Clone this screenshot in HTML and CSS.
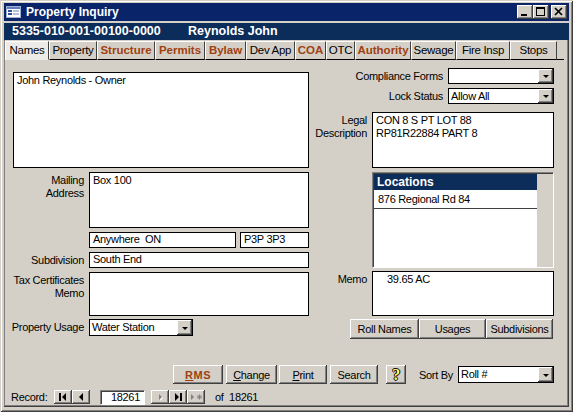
FILE: index.html
```html
<!DOCTYPE html>
<html>
<head>
<meta charset="utf-8">
<title>Property Inquiry</title>
<link rel="stylesheet" href="styles.css">
</head>
<body>
<div class="window">
  <div class="titlebar">
    <svg class="appicon" width="15" height="12" viewBox="0 0 15 12">
      <rect x="0.5" y="0.5" width="14" height="11" fill="#fff" stroke="#9fb0d0"/>
      <rect x="1" y="1" width="13" height="2" fill="#5f7fc0"/>
      <rect x="2" y="4" width="4" height="2" fill="#2f4f98"/>
      <rect x="7" y="4" width="6" height="2" fill="#b4c2de"/>
      <rect x="2" y="7" width="4" height="2" fill="#2f4f98"/>
      <rect x="7" y="7" width="6" height="2" fill="#b4c2de"/>
    </svg>
    <span class="title">Property Inquiry</span>
    <div class="winbtns">
      <span class="wb"><svg width="16" height="14" viewBox="0 0 16 14"><rect x="4" y="9" width="6" height="2" fill="#000"/></svg></span>
      <span class="wb"><svg width="16" height="14" viewBox="0 0 16 14"><rect x="3.5" y="2.5" width="8" height="8" fill="none" stroke="#000"/><rect x="3" y="2" width="9" height="2" fill="#000"/></svg></span>
      <span class="wb wb-close"><svg width="16" height="14" viewBox="0 0 16 14"><path d="M4 3 L11 10 M11 3 L4 10" stroke="#000" stroke-width="1.7"/></svg></span>
    </div>
  </div>

  <div class="client">
    <div class="header"><span class="roll">5335-010-001-00100-0000</span><span>Reynolds John</span></div>

    <div class="tabs">
      <span class="tab active">Names</span>
      <span class="tab">Property</span>
      <span class="tab hot">Structure</span>
      <span class="tab hot">Permits</span>
      <span class="tab hot">Bylaw</span>
      <span class="tab">Dev App</span>
      <span class="tab hot">COA</span>
      <span class="tab">OTC</span>
      <span class="tab hot">Authority</span>
      <span class="tab">Sewage</span>
      <span class="tab">Fire Insp</span>
      <span class="tab">Stops</span>
      <span class="tab-fill"></span>
    </div>

    <div class="panel">
      <div class="col-left">
        <div class="box owner">John Reynolds - Owner</div>
        <div class="row">
          <div class="lbl lbl-top">Mailing<br>Address</div>
          <div class="box mailing">Box 100</div>
        </div>
        <div class="row indent">
          <div class="box city">Anywhere&nbsp; ON</div>
          <div class="box postal">P3P 3P3</div>
        </div>
        <div class="row">
          <div class="lbl">Subdivision</div>
          <div class="box line">South End</div>
        </div>
        <div class="row">
          <div class="lbl lbl-top">Tax Certificates<br>Memo</div>
          <div class="box taxmemo"></div>
        </div>
        <div class="row row-usage">
          <div class="lbl">Property Usage</div>
          <div class="combo usage"><span class="val">Water Station</span><span class="dd"><span class="arrow"></span></span></div>
        </div>
      </div>

      <div class="col-right">
        <div class="row">
          <div class="rlbl">Compliance Forms</div>
          <div class="combo rcombo"><span class="val"></span><span class="dd"><span class="arrow"></span></span></div>
        </div>
        <div class="row">
          <div class="rlbl">Lock Status</div>
          <div class="combo rcombo"><span class="val">Allow All</span><span class="dd"><span class="arrow"></span></span></div>
        </div>
        <div class="row legal-row">
          <div class="slbl">Legal<br>Description</div>
          <div class="box legal">CON 8 S PT LOT 88<br>RP81R22884 PART 8</div>
        </div>
        <div class="row">
          <div class="listbox">
            <div class="list">
              <div class="lhead">Locations</div>
              <div class="lrow">876 Regional Rd 84</div>
            </div>
            <div class="lpad"></div>
          </div>
        </div>
        <div class="row memo-row">
          <div class="slbl">Memo</div>
          <div class="box memo">39.65 AC</div>
        </div>
        <div class="row btn-row">
          <span class="btn b-roll">Roll Names</span>
          <span class="btn b-usages">Usages</span>
          <span class="btn b-subs">Subdivisions</span>
        </div>
      </div>
    </div>

    <div class="actions">
      <span class="btn b-rms"><u>R</u>MS</span>
      <span class="btn b-change"><u>C</u>hange</span>
      <span class="btn b-print"><u>P</u>rint</span>
      <span class="btn b-search">Search</span>
      <span class="btn b-help"><span class="q">?</span></span>
      <span class="sort-lbl">Sort By</span>
      <div class="combo sortcombo"><span class="val">Roll #</span><span class="dd"><span class="arrow"></span></span></div>
    </div>

    <div class="nav">
      <span class="rec-lbl">Record:</span>
      <span class="nb"><svg width="18" height="14" viewBox="0 0 18 14"><rect x="5" y="3" width="2" height="8" fill="#000"/><path d="M12 3 L8 7 L12 11 Z" fill="#000"/></svg></span>
      <span class="nb"><svg width="18" height="14" viewBox="0 0 18 14"><path d="M11 3 L7 7 L11 11 Z" fill="#000"/></svg></span>
      <span class="recbox">18261</span>
      <span class="nb"><svg width="18" height="14" viewBox="0 0 18 14"><path d="M8 4 L11 7 L8 10 Z" fill="#fff" transform="translate(1 1)"/><path d="M8 4 L11 7 L8 10 Z" fill="#808080"/></svg></span>
      <span class="nb"><svg width="18" height="14" viewBox="0 0 18 14"><path d="M6 3 L10 7 L6 11 Z" fill="#000"/><rect x="11" y="3" width="2" height="8" fill="#000"/></svg></span>
      <span class="nb"><svg width="18" height="14" viewBox="0 0 18 14"><path d="M4 4 L7 7 L4 10 Z" fill="#808080"/><path d="M10 7 H15 M12.5 4.5 V9.5 M10.8 5.3 L14.2 8.7 M14.2 5.3 L10.8 8.7" stroke="#808080" stroke-width="1"/></svg></span>
      <span class="of">of&nbsp; 18261</span>
    </div>
  </div>
</div>
</body>
</html>
```

FILE: styles.css
```css
* { box-sizing: border-box; margin: 0; padding: 0; }

body {
  width: 573px;
  height: 412px;
  overflow: hidden;
  background: #d4d0c8;
  font-family: "Liberation Sans", Arial, sans-serif;
  font-size: 11px;
  letter-spacing: -0.3px;
  color: #000;
}

.window {
  width: 573px;
  height: 412px;
  background: #d4d0c8;
  padding: 3px 4px 5px 4px;
  display: flex;
  flex-direction: column;
  box-shadow: inset 1px 1px #d4d0c8, inset -1px -1px #404040, inset 2px 2px #fff, inset -2px -2px #808080;
}

/* title bar */
.titlebar {
  height: 18px;
  background: #0a246a;
  color: #fff;
  display: flex;
  align-items: center;
  letter-spacing: 0;
}
.appicon { margin-left: 2px; flex: none; }
.title { margin-left: 5px; font-weight: bold; font-size: 12px; }
.winbtns { margin-left: auto; margin-right: 2px; display: flex; }
.wb {
  width: 16px;
  height: 14px;
  background: #d4d0c8;
  display: block;
  box-shadow: inset -1px -1px #404040, inset 1px 1px #fff, inset -2px -2px #808080;
}
.wb svg { display: block; }
.wb-close { margin-left: 2px; }

/* client */
.client {
  flex: 1;
  margin-top: 2px;
  display: flex;
  flex-direction: column;
  box-shadow: inset -1px -1px #404040, inset -2px -2px #808080, inset 1px 0 #808080;
}

.header {
  height: 17px;
  background: #0c2c5a;
  color: #fff;
  font-weight: bold;
  font-size: 12.5px;
  line-height: 17px;
  letter-spacing: 0;
  padding-left: 8px;
  display: flex;
}
.roll { width: 176px; }

/* tabs */
.tabs {
  height: 20px;
  padding-top: 1px;
  padding-left: 1px;
  margin-right: 5px;
  display: grid;
  grid-template-columns: 44px 48px 58px 50px 41px 49px 31px 29px 56px 45px 54px 47px 1fr;
}
.tab {
  height: 19px;
  line-height: 17px;
  font-size: 11.5px;
  text-align: center;
  white-space: nowrap;
  border-top: 1px solid #fff;
  border-left: 1px solid #fff;
  border-right: 1px solid #404040;
  border-bottom: 1px solid #000;
  background: #d4d0c8;
}
.tab.hot { color: #a0400f; font-weight: bold; letter-spacing: 0; }
.tab.active {
  background: #ecebe8;
  border-bottom-color: #ecebe8;
}
.tab-fill { border-bottom: 1px solid #000; }

/* panel */
.panel {
  display: flex;
  padding-left: 4px;
  height: 279px;
}
.col-left {
  width: 301px;
  padding-top: 12px;
  display: flex;
  flex-direction: column;
  gap: 4px;
}
.col-right {
  width: 241px;
  margin-left: 4px;
  padding-top: 8px;
  display: flex;
  flex-direction: column;
  gap: 4px;
}

.row { display: flex; }
.indent { padding-left: 81px; gap: 4px; }

.box {
  background: #fff;
  border: 1px solid #000;
  padding: 1px 3px;
  line-height: 13px;
  white-space: nowrap;
}
.owner { margin-left: 5px; width: 296px; height: 96px; }
.mailing { width: 220px; height: 56px; }
.city { width: 147px; height: 16px; line-height: 13px; padding-top: 0; }
.postal { width: 69px; height: 16px; padding-top: 0; }
.line { width: 220px; height: 16px; padding-top: 0; }
.taxmemo { width: 220px; height: 44px; }

.lbl {
  width: 81px;
  padding-right: 5px;
  text-align: right;
  white-space: nowrap;
  line-height: 16px;
}
.lbl-top { line-height: 13px; padding-top: 2px; }
.row-usage { margin-top: -1px; }

/* combo box */
.combo {
  display: flex;
  background: #fff;
  border: 1px solid #000;
  height: 16px;
}
.combo .val { flex: 1; padding-left: 2px; line-height: 14px; white-space: nowrap; }
.combo .dd {
  width: 15px;
  height: 14px;
  background: #d4d0c8;
  display: flex;
  align-items: center;
  justify-content: center;
  box-shadow: inset -1px -1px #404040, inset 1px 1px #fff, inset -2px -2px #808080;
}
.arrow {
  width: 0;
  height: 0;
  border-left: 3px solid transparent;
  border-right: 3px solid transparent;
  border-top: 3px solid #000;
  margin-top: 1px;
}
.usage { width: 104px; height: 17px; }
.usage .dd { height: 15px; }

.rlbl {
  flex: 1;
  text-align: right;
  padding-right: 5px;
  line-height: 16px;
  white-space: nowrap;
}
.rcombo { width: 106px; }

.legal-row { margin-top: 4px; }
.slbl {
  width: 59px;
  padding-right: 5px;
  text-align: right;
  line-height: 13px;
  padding-top: 2px;
  white-space: nowrap;
}
.legal { width: 182px; height: 56px; padding-top: 1px; }

/* list box */
.listbox {
  margin-left: 59px;
  width: 182px;
  height: 96px;
  display: flex;
  border: 1px solid;
  border-color: #808080 #fff #fff #808080;
  box-shadow: inset 1px 1px #404040;
  padding: 1px 0 0 1px;
}
.list { flex: 1; background: #fff; }
.lhead {
  height: 16px;
  background: #0c2c5a;
  color: #fff;
  font-weight: bold;
  font-size: 12px;
  letter-spacing: 0;
  line-height: 16px;
  padding-left: 3px;
}
.lrow {
  height: 19px;
  line-height: 18px;
  padding-left: 4px;
  border-bottom: 1px solid #404040;
}
.lpad { width: 16px; background: #d4d0c8; }

.memo-row { margin-top: -1px; }
.memo { width: 182px; height: 45px; padding-left: 14px; }

/* buttons */
.btn {
  display: flex;
  align-items: center;
  justify-content: center;
  height: 20px;
  background: #d4d0c8;
  white-space: nowrap;
  box-shadow: inset -1px -1px #404040, inset 1px 1px #fff, inset -2px -2px #808080;
}
.btn-row { justify-content: flex-end; margin-top: -1px; margin-right: 1px; }
.b-roll { width: 69px; }
.b-usages { width: 67px; }
.b-subs { width: 67px; }

.actions {
  margin-top: 26px;
  height: 19px;
  padding-left: 169px;
  display: flex;
  align-items: center;
}
.actions .btn { height: 19px; }
.b-rms { width: 50px; color: #a0400f; font-weight: bold; letter-spacing: 0.5px; }
.b-change { width: 51px; margin-left: 3px; }
.b-print { width: 48px; margin-left: 2px; }
.b-search { width: 48px; margin-left: 3px; }
.b-help { width: 20px; margin-left: 8px; }
.q {
  font-family: "Liberation Serif", serif;
  font-weight: bold;
  font-size: 16px;
  color: #ffff70;
  text-shadow: 1px 0 #000, -1px 0 #000, 0 1px #000, 0 -1px #000;
  line-height: 16px;
}
.sort-lbl { margin-left: 13px; width: 39px; }
.sortcombo { width: 96px; height: 17px; }
.sortcombo .dd { height: 15px; }

/* record navigation */
.nav {
  margin-top: 6px;
  height: 14px;
  display: flex;
  align-items: center;
  padding-left: 7px;
}
.rec-lbl { width: 43px; }
.nb {
  width: 18px;
  height: 14px;
  background: #d4d0c8;
  display: block;
  box-shadow: inset -1px -1px #404040, inset 1px 1px #fff, inset -2px -2px #808080;
}
.nb svg { display: block; }
.recbox {
  margin-left: 10px;
  width: 45px;
  height: 15px;
  background: #fff;
  text-align: right;
  padding-right: 4px;
  line-height: 13px;
  border: 1px solid;
  border-color: #808080 #fff #fff #808080;
  box-shadow: inset 1px 1px #404040;
}
.recbox + .nb { margin-left: 6px; }
.of { margin-left: 10px; }
```
